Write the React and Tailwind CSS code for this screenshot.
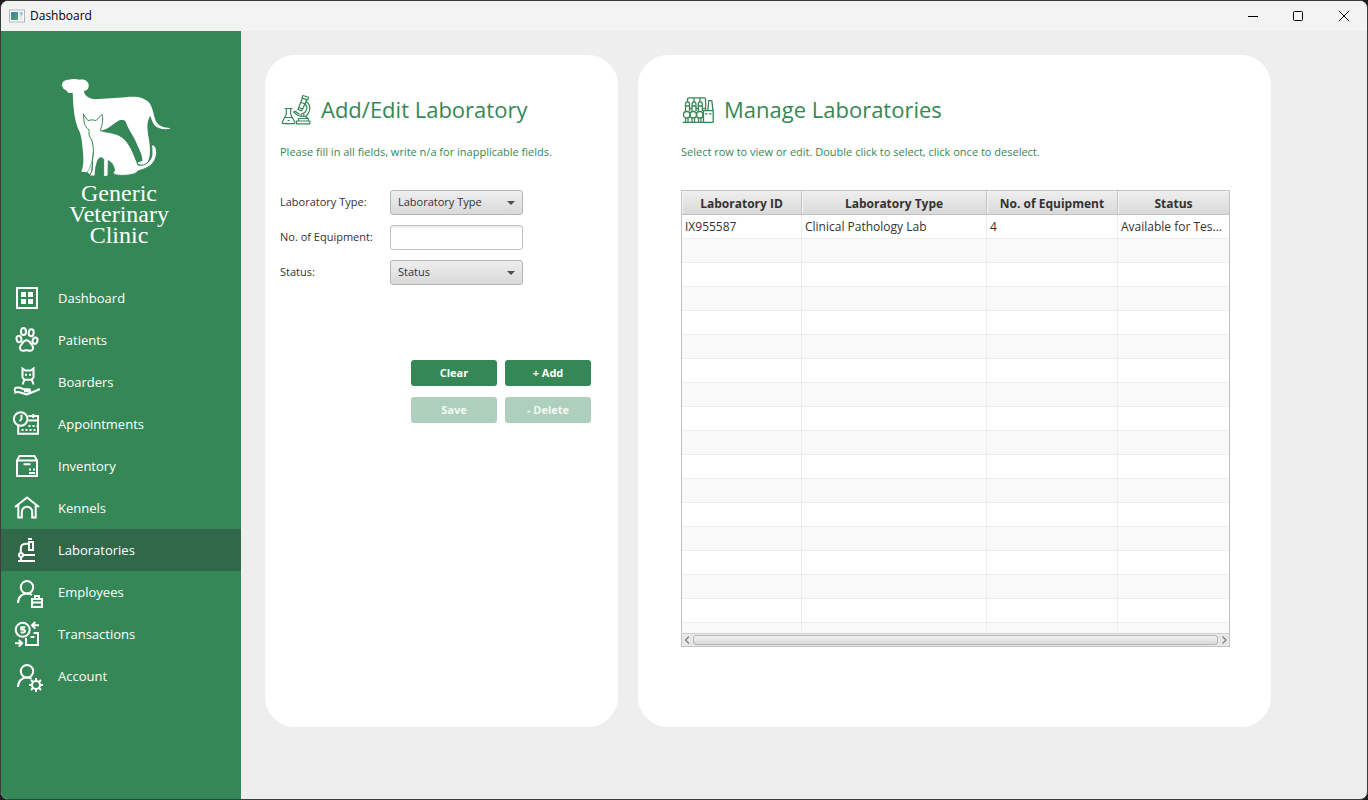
const ICON_STROKE = {
  fill: "none",
  stroke: "currentColor",
  strokeWidth: 2,
};

function NavIcon({ children }) {
  return (
    <svg viewBox="0 0 32 32" className="size-8 shrink-0" aria-hidden="true" {...ICON_STROKE}>
      {children}
    </svg>
  );
}

const icons = {
  dashboard: (
    <NavIcon>
      <rect x="6" y="6" width="20" height="20" />
      <path fill="currentColor" stroke="none" d="M10 10h5v5h-5zM17 10h5v5h-5zM10 17h5v5h-5zM17 17h5v5h-5z" />
    </NavIcon>
  ),
  patients: (
    <NavIcon>
      <ellipse cx="12.500" cy="7.500" rx="2.500" ry="3.500" />
      <ellipse cx="20.200" cy="8.700" rx="2.500" ry="3.500" transform="rotate(8 20.2 8.7)" />
      <ellipse cx="8" cy="15" rx="2.400" ry="3.200" transform="rotate(-12 8 15)" />
      <ellipse cx="24" cy="16.600" rx="2.400" ry="3.200" transform="rotate(15 24 16.6)" />
      <path d="M15.500 16.200c2.400 0 3.400 1.700 4.200 3.200.9 1.400 2.300 2.300 2.300 4.400 0 2.300-1.700 3.300-3.600 3-1.200-.2-1.700-.5-2.900-.5s-1.700.3-2.900.5c-1.900.3-3.600-.7-3.600-3 0-2.100 1.400-3 2.300-4.400.8-1.500 1.800-3.200 4.200-3.200z" />
    </NavIcon>
  ),
  boarders: (
    <NavIcon>
      <path d="M11.500 2.500l2.800 2h5.400l2.800-2v9l-1.800 2.200h-7.400l-1.800-2.200z" />
      <path d="M14 13.500c-1.500 1.500-2.200 3-2.200 5M20.200 13.500c1.500 1.500 2.200 3 2.200 5" />
      <path d="M14 7.700h2v2h-2zM18 7.700h2v2h-2z" fill="currentColor" stroke="none" />
      <path d="M3.500 22.500c3-1.500 6-1.200 9 .8h5.500c1.500 0 1.500 2 0 2h-5M3.500 22.500l.8 4c2.200-1 4-.7 6 .3l5 1.700c4-1.300 9-3.500 13.500-5.500" />
    </NavIcon>
  ),
  appointments: (
    <NavIcon>
      <circle cx="9.700" cy="11" r="6.800" />
      <path d="M10.500 6.800v4l-1.700 2.500" />
      <path d="M7.200 18v7.700H27V8h-9.500M17.500 12.500H27M22.300 6v4" />
      <path strokeDasharray="2 2" d="M17.500 18h9M10.500 22h14" />
    </NavIcon>
  ),
  inventory: (
    <NavIcon>
      <path d="M6 10.500l2.500-4.500h15l2.500 4.500V26H6zM6 10.500h20M12.500 14.300h7" />
      <path d="M18 23h6M19 18.500v2M23 18.500v2" />
    </NavIcon>
  ),
  kennels: (
    <NavIcon>
      <path d="M4 15L16 5.500 28 15M7.300 13v12.500h3.500V20a5.200 5.200 0 0 1 10.400 0v5.500h3.500V13" />
    </NavIcon>
  ),
  laboratories: (
    <NavIcon>
      <path d="M17 5h4M18 8h4v8h-4zM17.500 9.800h-2.700c-3.400 0-5 2-5 5v4" />
      <circle cx="10" cy="21" r="2" />
      <path d="M12 21h12M10 23v4M7 27h17" />
    </NavIcon>
  ),
  employees: (
    <NavIcon>
      <circle cx="16" cy="11.300" r="6.200" />
      <path d="M7 27c0-6 4-9.500 9-9.500 1.800 0 3.500.4 5 1.500" />
      <path d="M21 23h10v8H21zM24 22.500V20h4v2.500M21 26.500h10M26 25.500v2" />
    </NavIcon>
  ),
  transactions: (
    <NavIcon>
      <circle cx="11.700" cy="11.800" r="7" />
      <path d="M14.300 9.300h-4v2.300c2.200-.4 3.700.2 3.700 1.500s-1.600 1.700-4.300 1.200" />
      <path d="M28 7.300h-6.500M24.300 4l-3.300 3.300 3.300 3.300M4 25.300h6.500M7.800 22l3.300 3.300-3.300 3.300" />
      <path d="M22.500 15H27v12H15v-7M19.500 19h4" />
    </NavIcon>
  ),
  account: (
    <NavIcon>
      <circle cx="16" cy="11.300" r="6.200" />
      <path d="M7 27c0-6 4-9.500 9-9.500 1.800 0 3.300.4 4.500 1.300" />
      <circle cx="25" cy="25" r="4" />
      <path d="M25 21v-3M25 29v3M21 25h-3M29 25h3M22.200 22.200L20 20M27.800 27.800L30 30M22.200 27.800L20 30M27.800 22.200L30 20" />
    </NavIcon>
  ),
};

const navItems = [
  ["Dashboard", icons.dashboard],
  ["Patients", icons.patients],
  ["Boarders", icons.boarders],
  ["Appointments", icons.appointments],
  ["Inventory", icons.inventory],
  ["Kennels", icons.kennels],
  ["Laboratories", icons.laboratories],
  ["Employees", icons.employees],
  ["Transactions", icons.transactions],
  ["Account", icons.account],
];

function ClinicLogo() {
  return (
    <div className="mt-[39px] flex flex-col items-center pr-1">
      <svg viewBox="0 0 420 330" className="h-[110px] w-[140px]" aria-hidden="true">
        <path
          fill="#fff"
          d="M38 46c2-12 10-17 22-17 8-3 22-3 32 0 14-2 26 4 27 16 1 11-6 17-14 18 0 12 14 23 33 25 32-2 62-4 92-6 32-4 56 0 72 18 10 14 12 40 20 56 10 14 22 17 40 18v3c-24 2-38-2-46-12-6-10-9-18-12-28-6 10-9 20-9 35 1 25 9 48 8 71 0 16-4 28-8 34l-9 11-24-8 18-8c0-20-12-38-20-58-10-22-22-36-28-54-4-12-10-10-16-10-15 0-35 33-76 35l-15 130-10-8-18-2c6-14 8-32 4-67-2-28-5-46-12-58-16-38-16-78-18-112l-12 1c-6-4-4-8-15-12-2-4-4-8-6-11z"
        />
        <path
          fill="#fff"
          stroke="#358856"
          strokeWidth="3"
          d="M102 132l15 20c8-3 18-3 24 0l18-19c5 18 0 32-5 48 15 8 42 4 64 20 26 18 36 52 49 84 24 6 44-15 42-40l-1-18c4-5 12 0 14 12 4 24-10 44-26 53-18 10-30 8-33 16-16 9-48 10-64 6-8-4-7-9-2-12-3-16-9-26-19-30l-1 46-13 2v-52c-4-6-12-6-16 0-6 14-9 26-10 50h-16c2-8 8-14 8-22l1-32c3-14 3-26 0-42-1-14-9-18-11-28-1-8 2-10 0-14-14-12-16-22-16-48z"
        />
        <path fill="none" stroke="#358856" strokeWidth="2" d="M133 246c-2 20-4 32-12 50l-8 14" />
      </svg>
      <p className="mt-[3px] text-center font-['Liberation_Serif',serif] text-2xl leading-[21px] text-white">
        Generic
        <br />
        Veterinary
        <br />
        Clinic
      </p>
    </div>
  );
}

function MicroscopeIcon() {
  return (
    <svg
      viewBox="0 0 32 32"
      className="size-8"
      fill="none"
      stroke="#358856"
      strokeWidth="1.200"
      strokeLinejoin="round"
      strokeLinecap="round"
      aria-hidden="true"
    >
      <path d="M4 14.500h7M5.300 14.700v5.500l-4 7.800c-.3.900.1 1.600 1 1.600h10.400c.9 0 1.400-.7 1-1.600l-4-7.800v-5.500M3.500 23.500h8M7 26.500h1" />
      <path d="M15.500 27h13.300v2.800H15.500zM17.500 27v-2.500h10V27M12.600 18l4 3.200c2 1 5 1.300 8 1.300M12.600 18l1.600-.8 4 2.800" />
      <path d="M21.800 1.500l5.800 1.800-.8 2.600-5.800-1.800zM21.300 4.300l-3.600 9.200 4 1.500 4-9.200M17.700 13.500l-.7 2 3.400 1.400 1-2M20 8.500l3.800 1.300" />
      <path d="M25 7.500c3.200 2 4.300 5 3.700 8.500-.5 2.800-1.800 4.500-4 6.500M24.500 10.500c1.500 1.500 1.700 4 .7 6-.7 1.500-1.600 2.300-3.200 3" />
      <circle cx="21.500" cy="21" r="1.500" />
      <path d="M24.500 22.500l2.500 2" />
    </svg>
  );
}

function PlantIcon() {
  return (
    <svg viewBox="0 0 34 32" className="h-8 w-[34px]" fill="none" stroke="#358856" strokeWidth="1.300" aria-hidden="true">
      <path d="M6.500 8V5.500c0-1 .6-1.600 1.600-1.600h15c1 0 1.500.6 1.500 1.600V17M13 4v4M19 4v4" />
      <path d="M4.500 17V10.200c0-3 4-3 4 0V17M11 17v-6.800c0-3 4-3 4 0V17M17.300 17v-6.800c0-3 4-3 4 0V17M4.500 12h4M11 12h4M17.300 12h4" />
      <path d="M8.500 14.500H11M15 14.500h2.300M21.300 14.500h3" />
      <rect x="2.500" y="17.500" width="6.500" height="6.500" rx="3" />
      <rect x="9" y="17.500" width="6.500" height="6.500" rx="3" />
      <rect x="15.500" y="17.500" width="6.500" height="6.500" rx="3" />
      <path d="M1.500 28.300h31M4.500 24v4M7 24v4M11 24v4M13.500 24v4M17.500 24v4M20 24v4" />
      <path d="M22.500 28V16.700h9.700V28M26.800 16.500l1-9.800h3l1.200 9.800M24 19.800h2.500M28 19.800h2.500" />
    </svg>
  );
}

function SelectField({ id, label }) {
  return (
    <div className="flex h-[25px] items-start">
      <label htmlFor={id} className="w-[110px] shrink-0 pt-0.5 leading-5">
        {label}:
      </label>
      <div className="relative w-[133px]">
        <select
          id={id}
          className="block h-[25px] w-full appearance-none rounded-[3px] border border-[#b5b5b5] bg-linear-to-b from-[#efefef] to-[#d9d9d9] pl-[7px] text-[#333]"
        >
          <option>{label}</option>
        </select>
        <svg
          viewBox="0 0 8 4"
          className="pointer-events-none absolute top-[11px] right-2 h-1 w-2"
          fill="#4d4d4d"
          aria-hidden="true"
        >
          <path d="M0 0h8L4 4z" />
        </svg>
      </div>
    </div>
  );
}

function ActionButton({ children, disabled }) {
  return (
    <button
      type="button"
      disabled={disabled}
      className="h-[26px] rounded-[3px] bg-[#358856] text-[11px] font-bold text-white disabled:bg-[#aecfbb] disabled:text-[#f3f9f5]"
    >
      {children}
    </button>
  );
}

const columns = ["Laboratory ID", "Laboratory Type", "No. of Equipment", "Status"];
const rows = [["IX955587", "Clinical Pathology Lab", "4", "Available for Testing"]];
const emptyRows = Array.from({ length: 17 }, () => ["", "", "", ""]);

function LabTable() {
  return (
    <div className="mb-20 flex min-h-0 flex-1 flex-col border border-[#c3c3c3]">
      <div className="min-h-0 flex-1 overflow-hidden">
        <table className="w-full table-fixed border-separate border-spacing-0 text-xs text-[#333]">
          <colgroup>
            <col className="w-[120px]" />
            <col className="w-[185px]" />
            <col className="w-[131px]" />
            <col />
          </colgroup>
          <thead>
            <tr className="h-6">
              {columns.map((name) => (
                <th
                  key={name}
                  scope="col"
                  className="h-6 border-r border-b border-[#c3c3c3] bg-linear-to-b from-[#efefef] to-[#d9d9d9] p-0 pt-0.5 font-bold shadow-[inset_1px_1px_0_#f3f3f3] last:border-r-0"
                >
                  {name}
                </th>
              ))}
            </tr>
          </thead>
          <tbody>
            {[...rows, ...emptyRows].map((cells, rowIndex) => (
              <tr key={rowIndex} className="h-6 even:bg-[#f9f9f9]">
                {cells.map((cell, index) => (
                  <td key={index} className="h-6 truncate border-r border-b border-[#ededed] px-[3px] py-0 last:border-r-0">
                    {cell}
                  </td>
                ))}
              </tr>
            ))}
          </tbody>
        </table>
      </div>
      <div className="flex h-[13px] items-center border-t border-[#d0d0d0] bg-[#e8e8e8]">
        <svg viewBox="0 0 11 10" className="h-2.5 w-[11px]" fill="none" stroke="#808080" strokeWidth="1.300" aria-hidden="true">
          <path d="M7 1.500L3.500 5 7 8.500" />
        </svg>
        <div className="h-2.5 flex-1 rounded-[3px] border border-[#b5b5b5] bg-linear-to-b from-[#f2f2f2] to-[#d9d9d9]" />
        <svg viewBox="0 0 11 10" className="h-2.5 w-[11px]" fill="none" stroke="#808080" strokeWidth="1.300" aria-hidden="true">
          <path d="M4.500 1.500L8 5 4.500 8.500" />
        </svg>
      </div>
    </div>
  );
}

function TitleBar() {
  return (
    <header className="flex h-[30px] shrink-0 items-center justify-between bg-[#f3f3f3] pl-2">
      <div className="flex items-center gap-[5px] text-xs text-black">
        <svg viewBox="0 0 16 14" className="h-3.5 w-4" aria-hidden="true">
          <defs>
            <linearGradient id="appIconFill" x1="0" y1="0" x2="1" y2="1">
              <stop offset="0" stopColor="#3f7fb0" />
              <stop offset="1" stopColor="#56a36a" />
            </linearGradient>
          </defs>
          <rect x=".5" y="1" width="15" height="12" fill="#fff" stroke="#b0b4b8" />
          <rect x="2" y="3" width="7" height="8" fill="url(#appIconFill)" />
          <rect x="10.500" y="3" width="3.500" height="3.500" fill="#a9c8dd" />
          <rect x="10.500" y="7" width="3.500" height="4" fill="#e2e8ec" />
        </svg>
        Dashboard
      </div>
      <div className="flex text-black">
        <button type="button" aria-label="Minimize" className="grid h-[30px] w-[45px] place-items-center">
          <svg viewBox="0 0 10 10" className="size-2.5" fill="none" stroke="currentColor" aria-hidden="true">
            <path d="M0 5.500h10" />
          </svg>
        </button>
        <button type="button" aria-label="Maximize" className="grid h-[30px] w-[46px] place-items-center">
          <svg viewBox="0 0 10 10" className="size-2.5" fill="none" stroke="currentColor" aria-hidden="true">
            <rect x=".5" y=".5" width="9" height="9" rx="1" />
          </svg>
        </button>
        <button type="button" aria-label="Close" className="grid h-[30px] w-[46px] place-items-center">
          <svg viewBox="0 0 10 10" className="size-2.5" fill="none" stroke="currentColor" aria-hidden="true">
            <path d="M0 0l10 10M10 0L0 10" />
          </svg>
        </button>
      </div>
    </header>
  );
}

export default function App() {
  return (
    <div className="h-screen min-h-[700px] bg-[#1c1c1c] font-['Open_Sans',sans-serif] text-[11px] text-[#333]">
      <div className="flex h-full flex-col overflow-hidden rounded-lg border border-[#3c3c3c] bg-[#eeeeee]">
        <TitleBar />
        <div className="flex min-h-0 flex-1">
          <aside className="w-60 shrink-0 bg-[#358856]">
            <ClinicLogo />
            <nav className="mt-[31px]">
              {navItems.map(([label, icon]) => (
                <a
                  key={label}
                  href="#"
                  aria-current={label === "Laboratories" ? "page" : undefined}
                  className="flex h-[42px] items-center gap-[15px] pl-2.5 text-[13px] text-white aria-[current=page]:bg-[#32684a]"
                >
                  {icon}
                  <span className="pt-0.5">{label}</span>
                </a>
              ))}
            </nav>
          </aside>

          <main className="grid min-w-0 flex-1 grid-cols-[353fr_633fr] gap-5 pt-6 pr-24 pb-[72px] pl-6">
            <section className="min-w-0 rounded-[30px] bg-white pt-[39px] pr-[27px] pl-[15px]">
              <h1 className="flex h-8 items-center gap-2 pl-px text-[22px] text-[#358856]">
                <MicroscopeIcon />
                <span className="pb-0.5">Add/Edit Laboratory</span>
              </h1>
              <p className="mt-4 leading-5 text-[#358856]">Please fill in all fields, write n/a for inapplicable fields.</p>
              <form className="mt-7">
                <div className="flex flex-col gap-2.5">
                  <SelectField id="lab-type" label="Laboratory Type" />
                  <div className="flex h-[25px] items-start">
                    <label htmlFor="equipment" className="w-[110px] shrink-0 pt-0.5 leading-5">
                      No. of Equipment:
                    </label>
                    <input
                      id="equipment"
                      type="text"
                      className="h-[25px] w-[133px] rounded-[3px] border border-[#c3c3c3] bg-white px-[7px] shadow-[inset_0_3px_3px_-2px_#ddd]"
                    />
                  </div>
                  <SelectField id="lab-status" label="Status" />
                </div>
                <div className="mt-[75px] ml-auto grid w-[180px] grid-cols-2 gap-x-2 gap-y-[11px]">
                  <ActionButton>Clear</ActionButton>
                  <ActionButton>+ Add</ActionButton>
                  <ActionButton disabled>Save</ActionButton>
                  <ActionButton disabled>- Delete</ActionButton>
                </div>
              </form>
            </section>

            <section className="flex min-h-0 min-w-0 flex-col rounded-[30px] bg-white pt-[39px] pr-[41px] pl-[43px]">
              <h2 className="flex h-8 items-center gap-[9px] text-[22px] text-[#358856]">
                <PlantIcon />
                <span className="pb-0.5">Manage Laboratories</span>
              </h2>
              <p className="mt-4 mb-7 leading-5 text-[#358856]">
                Select row to view or edit. Double click to select, click once to deselect.
              </p>
              <LabTable />
            </section>
          </main>
        </div>
      </div>
    </div>
  );
}
